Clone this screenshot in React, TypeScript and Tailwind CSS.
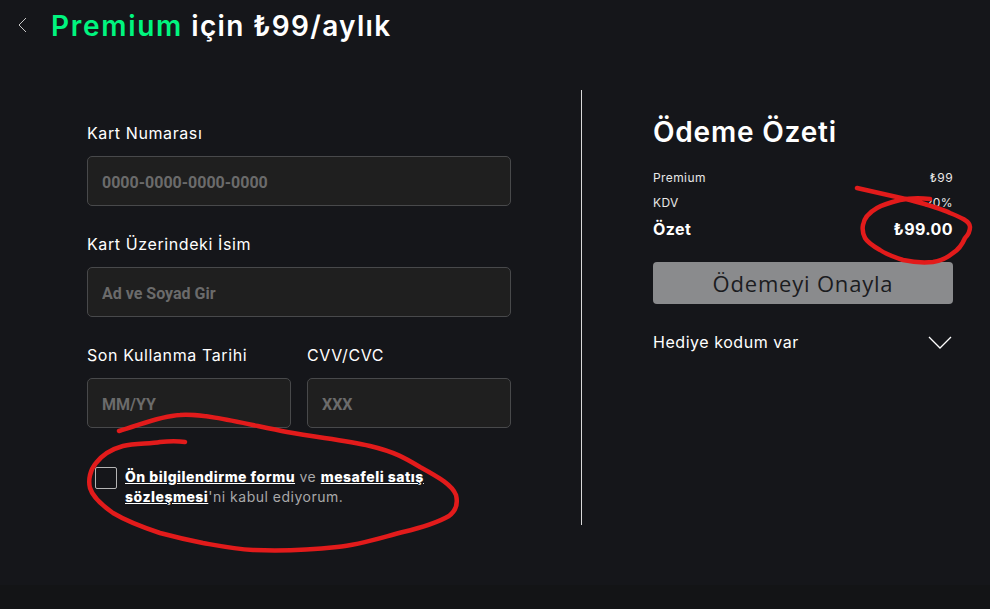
import React from "react";

const fieldClass =
  "w-full h-[50px] rounded-[5px] border border-[#48494b] bg-[#1f1f1f] px-[14px] pt-0.5 text-[16px] font-bold text-white outline-none placeholder:text-[#6b6b6b] [font-family:Roboto,sans-serif]";

function Field({ label, placeholder, className }: { label: string; placeholder: string; className?: string }) {
  return (
    <div className={className}>
      <label className="mb-3 block text-[16px] leading-[21px] tracking-[0.6px] text-white">{label}</label>
      <input className={fieldClass} placeholder={placeholder} />
    </div>
  );
}

export default function App() {
  return (
    <div className="relative flex h-[609px] w-[990px] flex-col overflow-hidden bg-[#15161a] text-white [font-family:Inter,sans-serif]">
      <header className="flex h-[50px] items-center">
        <svg className="ml-[17px] h-4 w-3" viewBox="0 0 12 16" fill="none" stroke="#c8c8c8" strokeWidth="1">
          <path d="M9 1 2 8l7 7" />
        </svg>
        <h1 className="ml-[22px] mt-[1px] text-[28px] font-semibold tracking-[1.3px]">
          <span className="tracking-[1.7px] text-[#00f57f]">Premium</span> için ₺99/aylık
        </h1>
      </header>

      <main className="flex h-[535px] pt-10">
        <section className="ml-[87px] w-[424px] pt-[33px]">
          <Field label="Kart Numarası" placeholder="0000-0000-0000-0000" className="mb-7" />
          <Field label="Kart Üzerindeki İsim" placeholder="Ad ve Soyad Gir" className="mb-7" />
          <div className="flex gap-4">
            <Field label="Son Kullanma Tarihi" placeholder="MM/YY" className="w-[204px]" />
            <Field label="CVV/CVC" placeholder="XXX" className="w-[204px]" />
          </div>
          <div className="mt-[39px] flex pl-2">
            <input type="checkbox" className="h-[22px] w-[22px] shrink-0 appearance-none rounded-[2px] border border-[#b5b5b5] bg-transparent" />
            <p className="ml-2 w-[310px] text-[14px] leading-5 tracking-[0.5px] text-[#a9a9a9]">
              <a className="font-extrabold text-white underline">Ön bilgilendirme formu</a> ve{" "}
              <a className="font-extrabold text-white underline">mesafeli satış sözleşmesi</a>'ni kabul ediyorum.
            </p>
          </div>
        </section>

        <div className="ml-[70px] h-[435px] w-px bg-[#d9d9d9]" />

        <aside className="ml-[71px] w-[300px] pt-6">
          <h2 className="text-[28px] font-semibold leading-9 tracking-[0.8px]">Ödeme Özeti</h2>
          <div className="mt-[15px] flex h-[25px] items-center justify-between text-[12px] tracking-[0.4px] text-[#e8e8e8]">
            <span>Premium</span>
            <span>₺99</span>
          </div>
          <div className="flex h-[25px] items-center justify-between text-[12px] tracking-[0.4px] text-[#e8e8e8]">
            <span>KDV</span>
            <span>20%</span>
          </div>
          <div className="flex h-[27px] items-center justify-between text-[16px] font-bold tracking-[0.4px]">
            <span>Özet</span>
            <span>₺99.00</span>
          </div>
          <button className="mt-[20px] h-[42px] w-full rounded-[4px] bg-[#8a8b8d] text-[22px] tracking-[0.8px] text-[#1b1c1f] [font-family:'Open_Sans',sans-serif]">
            Ödemeyi Onayla
          </button>
          <div className="mt-[26px] flex items-center justify-between">
            <span className="text-[16px] tracking-[0.55px]">Hediye kodum var</span>
            <svg className="mr-[1px] h-[15px] w-[24px]" viewBox="0 0 24 15" fill="none" stroke="#fff" strokeWidth="1.3">
              <path d="M1 2l11 11L23 2" />
            </svg>
          </div>
        </aside>
      </main>

      <footer className="flex-1 bg-[#131416]" />

      {/* red marker scribbles drawn over the screenshot */}
      <svg className="pointer-events-none absolute inset-0" width="990" height="609" fill="none" stroke="#e21b1b" strokeWidth="4.5" strokeLinecap="round" strokeLinejoin="round">
        <path d="M119 431C140 425 160 416 180 415C205 413 250 425 287 432C320 438 345 440 370 446C395 452 405 458 420 467C440 478 452 485 456 495C458 503 457 510 449 516C435 524 420 528 403 532C380 538 360 545 337 547C310 550 280 551 253 550C235 549 220 546 203 543C188 540 175 537 160 533C142 527 128 522 113 513C103 506 93 498 90 488C88 480 90 470 96 463C103 454 112 449 123 446C135 443 150 444 160 442C170 441 178 441 185 442" />
        <path d="M857 188C875 192 893 196 910 200C925 204 940 208 950 213C960 217 970 221 970 227C970 232 968 235 965 238C962 245 958 250 953 253C947 258 941 261 933 262C923 263 912 262 903 260C894 257 886 254 880 250C873 246 868 243 865 238C863 234 862 230 863 225C864 218 870 212 877 208C884 204 892 202 900 200C910 198 920 198 930 199" />
      </svg>
    </div>
  );
}
